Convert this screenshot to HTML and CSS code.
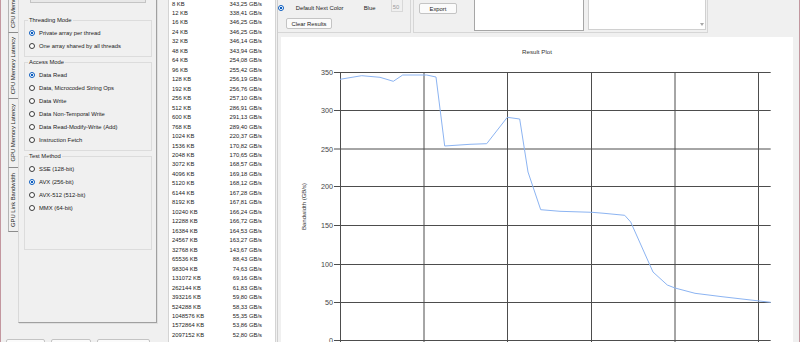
FILE: index.html
```html
<!DOCTYPE html>
<html lang="en">
<head>
    <meta charset="utf-8">
    <title>Memory Bandwidth Test</title>
    <link rel="stylesheet" href="styles.css">
</head>
<body>
<div class="side">
    <div class="tabbox">
        <div class="tabs">
            <div class="tab t1"><span>CPU Memory Bandwidth</span></div>
            <div class="tab t2"><span>CPU Memory Latency</span></div>
            <div class="tab t3"><span>GPU Memory Latency</span></div>
            <div class="tab t4"><span>GPU Link Bandwidth</span></div>
        </div>
        <div class="panel">
            <div class="topbar"></div>
            <div class="group first">
                <div class="legend">Threading Mode</div>
                <div class="opt"><span class="radio on"></span>Private array per thread</div>
                <div class="opt"><span class="radio"></span>One array shared by all threads</div>
            </div>
            <div class="group">
                <div class="legend">Access Mode</div>
                <div class="opt"><span class="radio on"></span>Data Read</div>
                <div class="opt"><span class="radio"></span>Data, Microcoded String Ops</div>
                <div class="opt"><span class="radio"></span>Data Write</div>
                <div class="opt"><span class="radio"></span>Data Non-Temporal Write</div>
                <div class="opt"><span class="radio"></span>Data Read-Modify-Write (Add)</div>
                <div class="opt"><span class="radio"></span>Instruction Fetch</div>
            </div>
            <div class="group tall">
                <div class="legend">Test Method</div>
                <div class="opt"><span class="radio"></span>SSE (128-bit)</div>
                <div class="opt"><span class="radio on"></span>AVX (256-bit)</div>
                <div class="opt"><span class="radio"></span>AVX-512 (512-bit)</div>
                <div class="opt"><span class="radio"></span>MMX (64-bit)</div>
            </div>
        </div>
    </div>
    <div class="buttons">
        <span class="btn w1"></span>
        <span class="btn w2"></span>
        <span class="btn w3"></span>
    </div>
</div>

<div class="list">
    <div class="row"><span>8 KB</span><span>343,25 GB/s</span></div>
    <div class="row"><span>12 KB</span><span>338,41 GB/s</span></div>
    <div class="row"><span>16 KB</span><span>346,25 GB/s</span></div>
    <div class="row"><span>24 KB</span><span>346,25 GB/s</span></div>
    <div class="row"><span>32 KB</span><span>346,14 GB/s</span></div>
    <div class="row"><span>48 KB</span><span>343,94 GB/s</span></div>
    <div class="row"><span>64 KB</span><span>254,08 GB/s</span></div>
    <div class="row"><span>96 KB</span><span>255,42 GB/s</span></div>
    <div class="row"><span>128 KB</span><span>256,19 GB/s</span></div>
    <div class="row"><span>192 KB</span><span>256,76 GB/s</span></div>
    <div class="row"><span>256 KB</span><span>257,10 GB/s</span></div>
    <div class="row"><span>512 KB</span><span>286,91 GB/s</span></div>
    <div class="row"><span>600 KB</span><span>291,13 GB/s</span></div>
    <div class="row"><span>768 KB</span><span>289,40 GB/s</span></div>
    <div class="row"><span>1024 KB</span><span>220,37 GB/s</span></div>
    <div class="row"><span>1536 KB</span><span>170,82 GB/s</span></div>
    <div class="row"><span>2048 KB</span><span>170,65 GB/s</span></div>
    <div class="row"><span>3072 KB</span><span>168,57 GB/s</span></div>
    <div class="row"><span>4096 KB</span><span>169,18 GB/s</span></div>
    <div class="row"><span>5120 KB</span><span>168,12 GB/s</span></div>
    <div class="row"><span>6144 KB</span><span>167,28 GB/s</span></div>
    <div class="row"><span>8192 KB</span><span>167,81 GB/s</span></div>
    <div class="row"><span>10240 KB</span><span>166,24 GB/s</span></div>
    <div class="row"><span>12288 KB</span><span>166,72 GB/s</span></div>
    <div class="row"><span>16384 KB</span><span>164,53 GB/s</span></div>
    <div class="row"><span>24567 KB</span><span>163,27 GB/s</span></div>
    <div class="row"><span>32768 KB</span><span>143,67 GB/s</span></div>
    <div class="row"><span>65536 KB</span><span>88,43 GB/s</span></div>
    <div class="row"><span>98304 KB</span><span>74,63 GB/s</span></div>
    <div class="row"><span>131072 KB</span><span>69,16 GB/s</span></div>
    <div class="row"><span>262144 KB</span><span>61,83 GB/s</span></div>
    <div class="row"><span>393216 KB</span><span>59,80 GB/s</span></div>
    <div class="row"><span>524288 KB</span><span>58,33 GB/s</span></div>
    <div class="row"><span>1048576 KB</span><span>55,35 GB/s</span></div>
    <div class="row"><span>1572864 KB</span><span>53,86 GB/s</span></div>
    <div class="row"><span>2097152 KB</span><span>52,80 GB/s</span></div>
</div>

<div class="main">
    <div class="toprow">
        <div class="grp ga">
            <div class="line1">
                <span class="radio on"></span>
                <span class="lbl">Default Next Color</span>
                <span class="blue">Blue</span>
                <span class="num">50</span>
            </div>
            <span class="btn clear">Clear Results</span>
        </div>
        <div class="grp gb">
            <span class="btn export">Export</span>
            <div class="box bx1"></div>
            <div class="box bx2"><span class="arrow"></span></div>
        </div>
    </div>
    <div class="chart">
        <svg class="plot" width="512" height="305" viewBox="281 37 512 305">
            <text class="title" x="537" y="54" text-anchor="middle">Result Plot</text>
            <text class="ytitle" transform="translate(306 206.5) rotate(-90)" text-anchor="middle">Bandwidth (GB/s)</text>
            <!-- horizontal grid -->
            <g class="grid">
                <line x1="334" y1="72.5" x2="770.7" y2="72.5"/>
                <line x1="334" y1="110.5" x2="770.7" y2="110.5"/>
                <line x1="334" y1="149" x2="770.7" y2="149"/>
                <line x1="334" y1="186.5" x2="770.7" y2="186.5"/>
                <line x1="334" y1="225.5" x2="770.7" y2="225.5"/>
                <line x1="334" y1="264.5" x2="770.7" y2="264.5"/>
                <line x1="334" y1="302.5" x2="770.7" y2="302.5"/>
                <line x1="334" y1="340.5" x2="770.7" y2="340.5"/>
                <!-- vertical grid -->
                <line x1="340.5" y1="72.5" x2="340.5" y2="345"/>
                <line x1="424" y1="72.5" x2="424" y2="345"/>
                <line x1="507.5" y1="72.5" x2="507.5" y2="345"/>
                <line x1="591.5" y1="72.5" x2="591.5" y2="345"/>
                <line x1="675" y1="72.5" x2="675" y2="345"/>
                <line x1="758.5" y1="72.5" x2="758.5" y2="345"/>
            </g>
            <g class="ylab" text-anchor="end">
                <text x="333" y="75.1">350</text>
                <text x="333" y="113.1">300</text>
                <text x="333" y="151.6">250</text>
                <text x="333" y="189.3">200</text>
                <text x="333" y="227.9">150</text>
                <text x="333" y="266.6">100</text>
                <text x="333" y="304.9">50</text>
                <text x="333" y="343.3">0</text>
            </g>
            <polyline class="curve" points="340,79.3 361.7,75.7 380,77.3 393.3,81.3 402.7,75 426.7,75 436,77 444.7,146 470,144.3 486.7,143.7 507.3,117.3 519.7,119 528,172 540.7,209.7 560,211.3 592,212.3 604,213.3 624.7,215.3 630.7,222 653,272 667.3,285 675,288 695,293.3 722,296.7 770.7,302.3"/>
        </svg>
    </div>
</div>
</body>
</html>
```

FILE: styles.css
```css
* {
    box-sizing: border-box;
}

body {
    margin: 0;
    width: 800px;
    height: 342px;
    overflow: hidden;
    display: flex;
    background-color: #f0f0f0;
    border-left: 1px solid #c3979f;
    border-right: 1px solid #c3979f;
    font-family: "Liberation Sans", Arial, sans-serif;
    font-size: 5.85px;
    color: #1b1b1b;
}

/*左侧选项卡*/
.side {
    width: 156px;
    flex: none;
}

.tabbox {
    display: flex;
    height: 363px;
    margin: -40px 0 0 7px;
}

.tabs {
    width: 10px;
    display: flex;
    flex-direction: column;
}

.tab {
    display: flex;
    justify-content: center;
    padding: 4px 0;
    line-height: 7px;
    border-left: 1px solid #b4b4b4;
    border-bottom: 1px solid #8c8c8c;
    white-space: nowrap;
}

.tab span {
    writing-mode: vertical-rl;
    transform: rotate(180deg);
}

.t3 {
    padding: 5px 0;
}

.t4 {
    padding: 5px 0 4px;
}

.panel {
    flex: 1;
    border: 1px solid #d9d9d9;
    border-right-color: #a0a0a0;
    border-bottom-color: #a0a0a0;
    box-shadow: 1px 1px 0 #e0e0e0;
}

.topbar {
    height: 12px;
    margin: 30px 10px 0 11px;
    background-color: #e8e8e8;
    border: 1px solid #c4c4c4;
}

.group {
    margin: 5px 4px 0 5px;
    padding: 0 0 4px 4px;
    border: 1px solid #dcdcdc;
}

.group.first {
    margin-top: 17px;
}

.group.tall {
    padding-bottom: 35px;
}

.legend {
    width: max-content;
    line-height: 8px;
    margin: -5px 0 2.5px -1px;
    padding: 0 1px;
    background-color: #f0f0f0;
}

.opt {
    display: flex;
    align-items: center;
    gap: 4px;
    height: 12.9px;
    white-space: nowrap;
}

.radio {
    flex: none;
    width: 6px;
    height: 6px;
    border-radius: 50%;
    border: 1px solid #3c3c3c;
    background-color: #fff;
}

.radio.on {
    border: 1.5px solid #0b5cbf;
    background: radial-gradient(circle, #0b5cbf 0 1.1px, #fff 1.5px);
}

.buttons {
    display: flex;
    gap: 6px;
    margin: 16px 0 0 5px;
}

.btn {
    flex: none;
    display: flex;
    align-items: center;
    justify-content: center;
    background-color: #fbfbfb;
    border: 1px solid #c4c4c4;
    border-radius: 2px;
    white-space: nowrap;
}

.buttons .btn {
    height: 14px;
}

.w1 {
    width: 39px;
}

.w2 {
    width: 40px;
}

.w3 {
    width: 53px;
}

/*结果列表*/
.list {
    flex: none;
    width: 108px;
    height: 350px;
    margin: -3px 0 0 11px;
    padding-top: 1.5px;
    background-color: #fff;
    border: 1px solid #d4d4d4;
}

.row {
    display: flex;
    justify-content: space-between;
    padding: 0 13px 0 3px;
    line-height: 9.47px;
    white-space: nowrap;
}

/*右侧*/
.main {
    flex: 1;
    display: flex;
    flex-direction: column;
    margin-left: 1px;
    border-left: 1px solid #cfcfcf;
}

.toprow {
    flex: none;
    display: flex;
    height: 33px;
}

.grp {
    border-right: 1px solid #d6d6d6;
    border-bottom: 1px solid #d6d6d6;
}

.ga {
    width: 133px;
}

.line1 {
    display: flex;
    align-items: center;
    height: 13px;
    margin-top: 1px;
    white-space: nowrap;
}

.line1 .lbl {
    width: 68px;
    margin-left: 11.7px;
}

.blue {
    width: 27px;
}

.num {
    align-self: flex-start;
    width: 12px;
    height: 14px;
    margin-top: -3px;
    padding-left: 1px;
    line-height: 16px;
    color: #9a9a9a;
    border: 1px solid #d8d8d8;
}

.clear {
    width: 46px;
    height: 11px;
    margin: 4px 0 0 8px;
}

.gb {
    width: 295px;
    margin-left: 2px;
    display: flex;
    align-items: flex-start;
    border-left: 1px solid #d6d6d6;
}

.export {
    width: 38px;
    height: 11px;
    margin: 3px 0 0 5px;
}

.box {
    flex: none;
    margin-top: -5px;
    background-color: #fff;
}

.bx1 {
    width: 110px;
    height: 36px;
    margin-left: 17px;
    border: 1px solid #a6a6a6;
}

.bx2 {
    width: 118px;
    height: 34.5px;
    margin-left: 4px;
    display: flex;
    justify-content: flex-end;
    align-items: flex-end;
    border: 1px solid #d0d0d0;
}

.arrow {
    width: 0;
    height: 0;
    margin: 0 1.5px 3px 0;
    border-left: 2.5px solid transparent;
    border-right: 2.5px solid transparent;
    border-top: 3px solid #a8a8a8;
}

/*图表*/
.chart {
    flex: 1;
    margin: 4px 6px 0 3px;
    background-color: #fff;
}

.plot {
    display: block;
}

.title {
    font-size: 6.2px;
    fill: #333;
}

.ytitle {
    font-size: 6px;
    fill: #333;
}

.ylab {
    font-size: 7.2px;
    fill: #444;
}

.grid line {
    stroke: #4d4d4d;
    stroke-width: 1;
}

.curve {
    fill: none;
    stroke: #8cb4f2;
    stroke-width: 1;
}
```
